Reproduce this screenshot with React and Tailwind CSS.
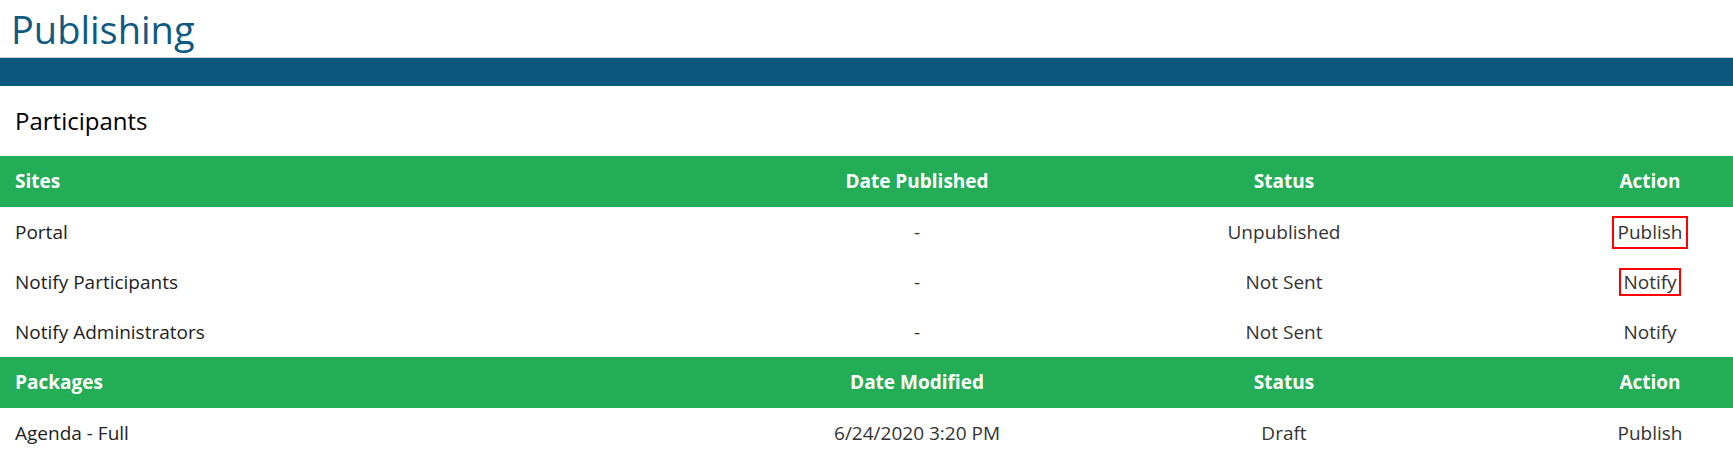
const siteRows = [
  { name: "Portal", date: "-", status: "Unpublished", action: "Publish", box: "px-[3px] leading-[29px]" },
  { name: "Notify Participants", date: "-", status: "Not Sent", action: "Notify", box: "px-[2px] leading-[24px]" },
  { name: "Notify Administrators", date: "-", status: "Not Sent", action: "Notify", box: null },
];

const packageRows = [
  { name: "Agenda - Full", date: "6/24/2020 3:20 PM", status: "Draft", action: "Publish", box: null },
];

const cols = "grid grid-cols-[717px_400px_334px_1fr] items-center";

function HeaderRow({ first, second }) {
  return (
    <div className={`${cols} h-[51px] bg-[#23ad56] text-[19px] font-bold text-white`}>
      <div className="pl-[15px]">{first}</div>
      <div className="text-center">{second}</div>
      <div className="text-center">Status</div>
      <div className="flex justify-end">
        <div className="w-[166px] text-center">Action</div>
      </div>
    </div>
  );
}

function DataRow({ row }) {
  return (
    <div className={`${cols} h-[50px] text-[19px] text-[#333]`}>
      <div className="pl-[15px] text-[#222]">{row.name}</div>
      <div className="text-center">{row.date}</div>
      <div className="text-center">{row.status}</div>
      <div className="flex justify-end">
        <div className="flex w-[166px] justify-center">
          <span className={row.box ? `border-2 border-[#ff0000] ${row.box}` : "px-[4px] leading-[28px]"}>
            {row.action}
          </span>
        </div>
      </div>
    </div>
  );
}

export default function App() {
  return (
    <div className="w-[1733px] h-[469px] bg-white font-['Open_Sans',sans-serif]">
      <div className="h-[57px] pl-[11px] text-[38px] leading-[58px] text-[#0f5a82]">Publishing</div>
      <div className="h-[29px] border-t border-[#c8c8c8] bg-[#0b587f]" />
      <div className="flex h-[70px] items-center pl-[15px] text-[24px] text-black">Participants</div>
      <HeaderRow first="Sites" second="Date Published" />
      {siteRows.map((row) => (
        <DataRow key={row.name} row={row} />
      ))}
      <HeaderRow first="Packages" second="Date Modified" />
      {packageRows.map((row) => (
        <DataRow key={row.name} row={row} />
      ))}
    </div>
  );
}
